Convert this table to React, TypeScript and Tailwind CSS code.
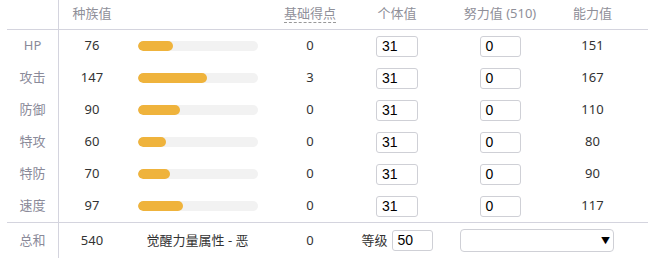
import React from 'react';

const STATS = [
  { label: 'HP', base: 76, ep: 0, value: 151 },
  { label: '攻击', base: 147, ep: 3, value: 167 },
  { label: '防御', base: 90, ep: 0, value: 110 },
  { label: '特攻', base: 60, ep: 0, value: 80 },
  { label: '特防', base: 70, ep: 0, value: 90 },
  { label: '速度', base: 97, ep: 0, value: 117 },
];

const COLS = 'grid grid-cols-[52px_66px_145px_80px_94px_112px_73px]';

function NumBox({ value, width = 'w-[42px]' }: { value: string; width?: string }) {
  return (
    <div
      className={`${width} h-[21px] border border-[#cfd0d6] rounded-[3px] bg-white pl-[5px] flex items-center text-[14px] text-black font-['Liberation_Sans',sans-serif]`}
    >
      {value}
    </div>
  );
}

export default function App() {
  return (
    <div className="w-[648px] h-[258px] bg-white overflow-hidden pl-[7px] font-['Noto_Sans','Noto_Sans_CJK_SC',sans-serif] text-[13px] text-[#333]">
      {/* Header */}
      <div className={`${COLS} h-[30px] border-b border-[#d4d4de] text-[#8f8f99]`}>
        <div className="border-r border-[#d4d4de]" />
        <div className="flex items-center justify-center pb-[1px]">种族值</div>
        <div />
        <div className="flex items-center justify-center pb-[1px]">
          <span className="border-b border-dashed border-[#999] leading-[17px]">基础得点</span>
        </div>
        <div className="flex items-center justify-center pb-[1px]">个体值</div>
        <div className="flex items-center justify-center pb-[1px]">努力值 (510)</div>
        <div className="flex items-center justify-center pb-[1px]">能力值</div>
      </div>

      {/* Stat rows */}
      {STATS.map((s) => (
        <div key={s.label} className={`${COLS} h-[32px]`}>
          <div className="border-r border-[#d4d4de] flex items-center justify-center text-[#8a8a99]">
            {s.label}
          </div>
          <div className="flex items-center justify-center">{s.base}</div>
          <div className="flex items-center justify-center">
            <div className="w-[120px] h-[10px] rounded-full bg-[#f2f2f2] overflow-hidden">
              <div
                className="h-full rounded-full bg-[#efb33c]"
                style={{ width: `${(s.base / 255) * 120}px` }}
              />
            </div>
          </div>
          <div className="flex items-center justify-center">{s.ep}</div>
          <div className="flex items-center justify-center">
            <NumBox value="31" />
          </div>
          <div className="flex items-center justify-center">
            <NumBox value="0" width="w-[41px]" />
          </div>
          <div className="flex items-center justify-center">{s.value}</div>
        </div>
      ))}

      {/* Totals */}
      <div className={`${COLS} h-[36px] border-t border-[#d4d4de]`}>
        <div className="border-r border-[#d4d4de] flex items-center justify-center text-[#8a8a99]">
          总和
        </div>
        <div className="flex items-center justify-center">540</div>
        <div className="flex items-center justify-center">觉醒力量属性 - 恶</div>
        <div className="flex items-center justify-center">0</div>
        <div className="flex items-center justify-center gap-[4px]">
          <span>等级</span>
          <NumBox value="50" width="w-[41px]" />
        </div>
        <div className="col-span-2 flex items-center pl-[16px]">
          <div className="w-[154px] h-[23px] border border-[#cfd0d6] rounded-[4px] bg-white flex items-center justify-end pr-[3px]">
            <span className="text-[9px] text-black">▼</span>
          </div>
        </div>
      </div>
    </div>
  );
}
